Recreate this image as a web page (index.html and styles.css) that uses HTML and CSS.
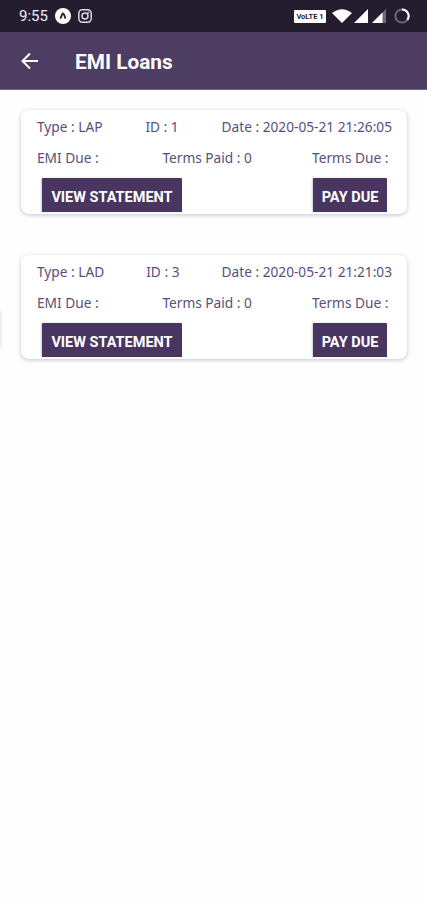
FILE: index.html
```html
<!DOCTYPE html>
<html lang="en">
<head>
<meta charset="utf-8">
<meta name="viewport" content="width=device-width, initial-scale=1">
<title>EMI Loans</title>
<link rel="stylesheet" href="styles.css">
</head>
<body>
<div class="status">
  <span class="clock">9:55</span>
  <svg class="app" width="16" height="16" viewBox="0 0 16 16"><circle cx="8" cy="8" r="8" fill="#fff"/><path d="M5.4 10.6 7.2 6.2Q8 4.8 8.8 6.2L10.6 10.6" fill="none" stroke="#241d30" stroke-width="1.8"/></svg>
  <svg class="insta" width="14" height="14" viewBox="0 0 14 14" fill="none" stroke="#ddd8e2" stroke-width="1.5"><rect x=".8" y=".8" width="12.4" height="12.4" rx="3.6"/><circle cx="7" cy="7" r="3"/><circle cx="10.4" cy="3.6" r=".3"/></svg>
  <span class="volte">VoLTE 1</span>
  <svg class="wifi" width="20" height="14" viewBox="0 0 20 14"><path d="M0 4Q10-3.6 20 4L10 14Z" fill="#fff"/></svg>
  <svg class="signal" width="14" height="14" viewBox="0 0 14 14"><path d="M14 0V14H0Z" fill="#fff"/></svg>
  <svg class="signal" width="14" height="14" viewBox="0 0 14 14"><path d="M14 0V14H0Z" fill="#6e6878"/><path d="M10.500 3.500V14H0Z" fill="#fff"/></svg>
  <svg class="ring" width="16" height="16" viewBox="0 0 16 16" fill="none" stroke-width="2"><circle cx="8" cy="8" r="6.600" stroke="#716779"/><path d="M8 1.400A6.600 6.600 0 0 1 13.400 11.800" stroke="#fff"/></svg>
</div>
<header class="bar">
  <svg width="18" height="18" viewBox="0 0 18 18" fill="none" stroke="#fff" stroke-width="2"><path d="M17 9H2M9 1.500 1.500 9 9 16.500"/></svg>
  <h1>EMI Loans</h1>
</header>
<main>
  <section class="card">
    <div class="row"><span>Type : LAP</span><span>ID : 1</span><span>Date : 2020-05-21 21:26:05</span></div>
    <div class="row"><span>EMI Due : </span><span>Terms Paid : 0</span><span>Terms Due : </span></div>
    <div class="actions"><button class="view">VIEW STATEMENT</button><button class="pay">PAY DUE</button></div>
  </section>
  <section class="card">
    <div class="row"><span>Type : LAD</span><span>ID : 3</span><span>Date : 2020-05-21 21:21:03</span></div>
    <div class="row"><span>EMI Due : </span><span>Terms Paid : 0</span><span>Terms Due : </span></div>
    <div class="actions"><button class="view">VIEW STATEMENT</button><button class="pay">PAY DUE</button></div>
  </section>
  <div class="handle"></div>
</main>
</body>
</html>
```
FILE: styles.css
```css
* { box-sizing: border-box; }
body { margin: 0; height: 900px; overflow: hidden; background: #fefefe; font-family: "Noto Sans", sans-serif; }
svg { display: block; flex: none; }
.status { display: flex; align-items: center; height: 32px; padding: 0 17px 0 19px; background: #241d30; }
.clock { width: 36px; font: 400 15px/32px Roboto, sans-serif; color: #f0edf3; }
.insta { margin-left: 7px; }
.volte { margin-left: auto; width: 32px; height: 13px; border-radius: 1px; background: #fff; color: #241d30; font: 700 7.500px/13px Roboto, sans-serif; text-align: center; white-space: nowrap; }
.wifi { margin-left: 6px; }
.signal { margin-left: 2px; }
.signal + .signal { margin-left: 4px; }
.ring { margin-left: 8px; }
.bar { display: flex; align-items: center; height: 58px; padding-left: 21px; background: #4e3d62; border-bottom: 1px solid #75687f; }
.bar h1 { margin: 2px 0 0 36px; font: 700 20.800px/28px Roboto, sans-serif; color: #fff; }
main { position: relative; display: flex; flex-direction: column; gap: 41px; padding: 20px 20px 0 21px; }
.card { height: 104px; padding: 2px 15px 0 16px; border-radius: 8px; background: #fff; box-shadow: 0 1px 4px rgba(0, 0, 0, .24); }
.row { display: flex; justify-content: space-between; height: 31px; font-size: 13.700px; line-height: 30px; color: #57507a; white-space: pre; }
.actions { display: flex; justify-content: space-between; padding: 4px 5px 0; }
button { height: 34px; padding: 5px 0 0; border: 0; border-radius: 1px 1px 0 0; background: #483660; color: #fff; font: 700 14.500px/29px Roboto, sans-serif; white-space: nowrap; box-shadow: -1px 0 2px rgba(0, 0, 0, .2); }
.view { width: 140px; }
.pay { width: 74px; }
.handle { position: absolute; left: 0; top: 220px; width: 2px; height: 38px; border-radius: 0 2px 2px 0; background: #f1f1f1; }
```
